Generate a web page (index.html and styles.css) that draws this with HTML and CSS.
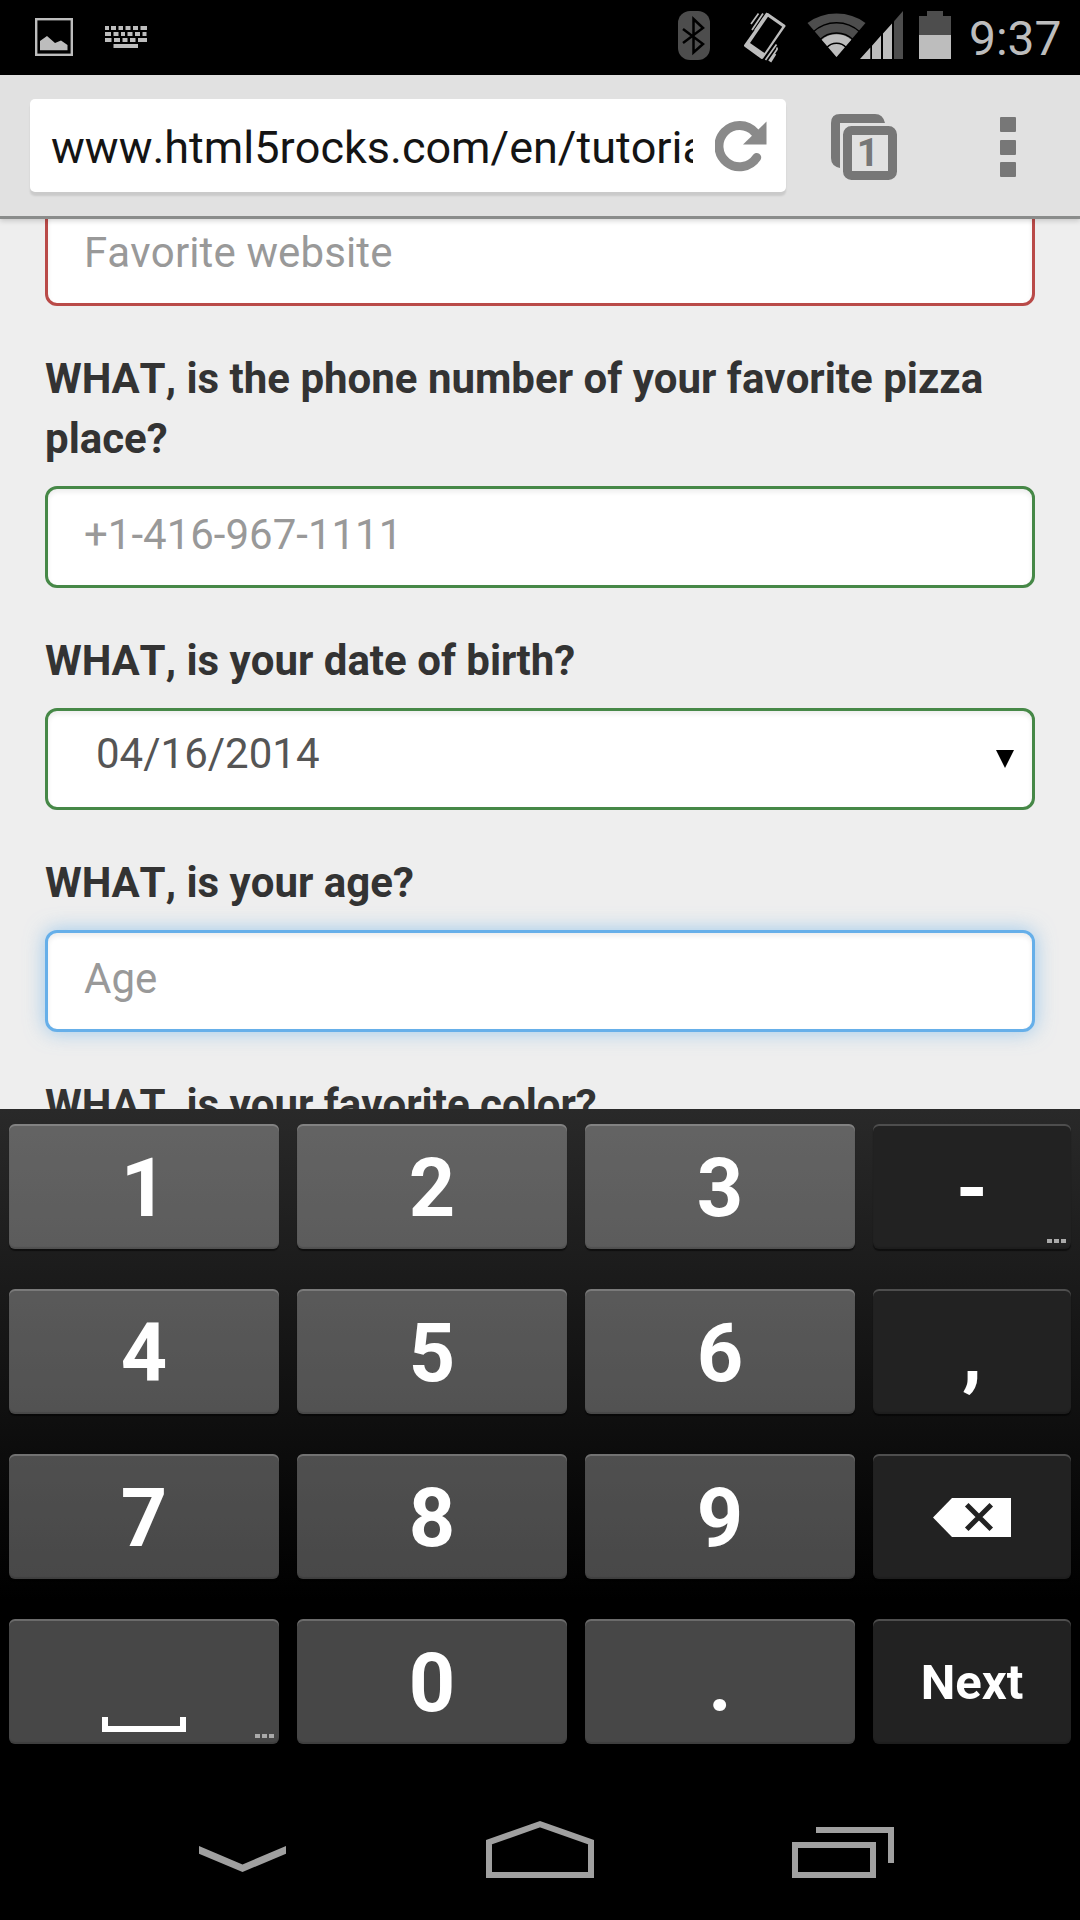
FILE: index.html
```html
<!DOCTYPE html>
<html lang="en">
<head>
<meta charset="utf-8">
<title>www.html5rocks.com</title>
<link rel="stylesheet" href="styles.css">
</head>
<body>
<div class="screen">
  <header class="status">
    <div class="status-left">
      <svg width="38" height="38" viewBox="0 0 38 38"><rect x="1.2" y="1.2" width="35.6" height="35.6" fill="none" stroke="#bdbdbd" stroke-width="2.4"/><path d="M5 32.3V23l7-5 8 7 6-2.500 6.500 4.500v5.300z" fill="#bdbdbd"/></svg>
      <svg width="42" height="22" viewBox="0 0 42 22" fill="none" stroke="#bdbdbd" stroke-width="4"><path d="M0 2h4m2 0h5m2.500 0h4.500m2.500 0h5m2.500 0h5m2.500 0h6.500M0 8h6m2.500 0h5m2.500 0h4m2.500 0h5m2.500 0h5m2.500 0h4M0 14h6.500m2.500 0h6m2.500 0h5m2.500 0h5.500m2.500 0h9M8.500 20h24.500"/></svg>
    </div>
    <div class="status-right">
      <svg class="bt" width="32" height="49" viewBox="0 0 32 49"><rect width="32" height="49" rx="12" fill="#4d4d4d"/><path d="M5 18l20 15-9.500 8.500V8L25 17 5 32" fill="none" stroke="#000" stroke-width="2.500"/></svg>
      <svg class="vib" width="42" height="51" viewBox="0 0 42 51"><path d="M23.500 2.500L40 14 18 45.500 1.500 33.500z" fill="#bdbdbd" stroke="#bdbdbd" stroke-width="3" stroke-linejoin="round"/><path d="M24 4.800L38.200 14.800 20.500 41 6 31z"/><path d="M14.500 1.500L7 12M19 1.500L8 18M23 1L11 18.500M32.500 32.500L21.500 48M33 35.500v2L25 49M31.500 42l-5 8" fill="none" stroke="#bdbdbd" stroke-width="1.700"/></svg>
      <svg class="wifi" width="59" height="45" viewBox="0 0 59 45"><path d="M29.500 44L.5 10Q13 .5 29.500 .5T58.500 10z" fill="#4d4d4d"/><path d="M29.500 44L14.700 26.700a22.800 22.800 0 0 1 29.600 0z" fill="#bdbdbd"/><g fill="none" stroke="#000" stroke-width="1.500"><path d="M6 19a34.300 34.300 0 0 1 47 0M12.500 27a24 24 0 0 1 34 0M19.500 35a13 13 0 0 1 20 0"/></g></svg>
      <svg class="signal" width="43" height="48" viewBox="0 0 43 48"><path d="M0 48L10.300 36.500V48zM12 48V34.700L21 24.600V48zM23 48V22.400L32 12.400V48z" fill="#bdbdbd"/><path d="M34 48V10.200L43 0v48z" fill="#4d4d4d"/></svg>
      <svg class="batt" width="32" height="48" viewBox="0 0 32 48"><path d="M0 24V5h8V0h16v5h8v19z" fill="#4d4d4d"/><path d="M0 24h32v24H0z" fill="#bdbdbd"/></svg>
      <span class="clock">9:37</span>
    </div>
  </header>

  <nav class="toolbar">
    <div class="omnibox">
      <span class="url">www.html5rocks.com/en/tutorials</span>
      <svg class="reload" width="52" height="52" viewBox="0 0 52 52"><path d="M41.700 36.500A20.600 20.600 0 1 1 40 11.500" fill="none" stroke="#8a8a8a" stroke-width="9" stroke-linecap="round"/><path d="M51.500 .5v23H28z" fill="#8a8a8a"/></svg>
    </div>
    <svg class="tabs" width="66" height="66" viewBox="0 0 66 66"><path d="M9 54q-9-2-9-10V9q0-9 9-9h35q8 0 10 9H9z" fill="#777"/><rect x="10" y="10" width="56" height="56" rx="8" fill="#e1e1e1"/><rect x="16.500" y="16.500" width="45" height="45" rx="4" fill="none" stroke="#777" stroke-width="9"/><text x="37" y="52" text-anchor="middle" class="tab-count">1</text></svg>
    <div class="menu"><i></i><i></i><i></i></div>
  </nav>

  <main class="page">
    <div class="field invalid first"><span class="ph site">Favorite website</span></div>
    <label class="question">WHAT, is the phone number of your favorite pizza place?</label>
    <div class="field valid"><span class="ph">+1-416-967-1111</span></div>
    <label class="question">WHAT, is your date of birth?</label>
    <div class="field valid date"><span class="value">04/16/2014</span><svg width="18" height="18" viewBox="0 0 18 18"><path d="M0 0h18L9 18z"/></svg></div>
    <label class="question">WHAT, is your age?</label>
    <div class="field focus"><span class="ph">Age</span></div>
    <label class="question">WHAT, is your favorite color?</label>
  </main>

  <section class="keyboard">
    <div class="key">1</div><div class="key">2</div><div class="key">3</div><div class="key side">-<span class="more"><i></i><i></i><i></i></span></div>
    <div class="key">4</div><div class="key">5</div><div class="key">6</div><div class="key side">,</div>
    <div class="key">7</div><div class="key">8</div><div class="key">9</div>
    <div class="key side icon"><svg width="78" height="39" viewBox="0 0 78 39"><path d="M0 19.500L19 0h59v39H19z" fill="#fff"/><path d="M35.500 8.500l21 21M56.500 8.500l-21 21" stroke="#222" stroke-width="5" stroke-linecap="square"/></svg></div>
    <div class="key space"><span class="bar"></span><span class="more"><i></i><i></i><i></i></span></div><div class="key">0</div><div class="key">.</div><div class="key side next">Next</div>
  </section>

  <footer class="navbar">
    <svg class="hide" width="87" height="26" viewBox="0 0 87 26"><path d="M0 0l43.500 18.500L87 0v7.800L43.500 26 0 7.800z" fill="#a0a0a0"/></svg>
    <svg class="home" width="108" height="57" viewBox="0 0 108 57"><path d="M3 54V21.200L54 3.200l51 18V54z" fill="none" stroke="#a0a0a0" stroke-width="6"/></svg>
    <svg class="recent" width="102" height="51" viewBox="0 0 102 51"><path d="M3 18h78v30H3zM24 3h75v33" fill="none" stroke="#a0a0a0" stroke-width="6"/></svg>
  </footer>
</div>
</body>
</html>
```
FILE: styles.css
```css
* { box-sizing: border-box; }
body { margin: 0; background: #000; font-family: Roboto, sans-serif; font-kerning: none; }
svg { display: block; flex: none; }
.screen { width: 1080px; height: 1920px; overflow: hidden; display: flex; flex-direction: column; }

.status { height: 75px; flex: none; display: flex; justify-content: space-between; padding: 0 19px 0 35px; }
.status-left { display: flex; gap: 32px; padding-top: 18px; }
.status-left svg + svg { margin-top: 8px; }
.status-right { display: flex; padding-top: 11px; }
.vib { margin: 1px 0 0 34px; }
.wifi { margin: 2px 0 0 21px; }
.signal { margin: 0 0 0 -6px; }
.batt { margin-left: 16px; }
.clock { width: 92px; flex: none; margin-left: 18px; font-size: 48px; line-height: 56px; color: #bdbdbd; white-space: nowrap; }

.toolbar { height: 144px; flex: none; display: flex; align-items: flex-start; padding: 24px 64px 0 30px; background: #e1e1e1; border-bottom: 3px solid #8a8c8b; box-shadow: 0 2px 5px rgba(0,0,0,.16); position: relative; z-index: 1; }
.omnibox { width: 756px; height: 93px; display: flex; background: #fff; border-radius: 5px; box-shadow: 0 4px 2px rgba(0,0,0,.1); padding: 22px 0 0 21px; }
.url { width: 642px; height: 60px; overflow: hidden; white-space: nowrap; font-size: 45px; line-height: 53px; color: #141414; }
.reload { margin-left: 22px; }
.tabs { margin: 15px 0 0 45px; }
.tab-count { font-size: 39px; font-weight: 700; fill: #777; }
.menu { display: flex; flex-direction: column; gap: 7.500px; margin: 18px 0 0 103px; }
.menu i { width: 16px; height: 15px; border-radius: 1px; background: #777; }

.page { height: 890px; flex: none; overflow: hidden; background: #eee; padding: 0 45px; display: flex; flex-direction: column; }
.field { height: 102px; flex: none; border: 3px solid; border-radius: 12px; background: #fff; padding: 0 36px; box-shadow: inset 0 3px 5px rgba(0,0,0,.075); font-size: 42px; line-height: 92px; white-space: nowrap; }
.first { margin-top: -15px; }
.invalid { border-color: #b94a48; }
.valid { border-color: #468847; }
.focus { border-color: #66afe9; box-shadow: inset 0 3px 5px rgba(0,0,0,.075), 0 0 20px rgba(102,175,233,.6); }
.ph { color: #999; }
.site { letter-spacing: .13px; }
.date { display: flex; justify-content: space-between; color: #555; padding: 0 18px 0 48px; line-height: 86px; }
.date svg { fill: #000; margin-top: 39px; }
.question { display: block; flex: none; margin: 43px 0 17px; font-size: 42px; line-height: 60px; font-weight: 700; color: #333; }

.keyboard { height: 667px; flex: none; display: grid; grid-template-columns: 270px 270px 270px 198px; grid-auto-rows: 125px; gap: 40px 18px; padding: 15px 9px 0; background: linear-gradient(#292929, #000 491px); }
.key { position: relative; border-radius: 6px; background: rgba(255,255,255,.28); box-shadow: inset 0 2px 0 rgba(255,255,255,.2), inset 0 -2px 1px rgba(0,0,0,.12), 0 2px 1px rgba(0,0,0,.5); color: #fff; font-size: 81px; font-weight: 700; line-height: 130px; text-align: center; }
.side { background: #222; }
.icon { display: flex; align-items: flex-start; padding: 44px 0 0 60px; }
.next { font-size: 49px; line-height: 128px; }
.space { display: flex; justify-content: center; align-items: flex-end; padding-bottom: 12px; }
.bar { width: 84px; height: 15px; border: 6px solid #fff; border-top: 0; }
.more { position: absolute; right: 5px; bottom: 6px; display: flex; gap: 2px; }
.more i { width: 5px; height: 4px; background: #aaa; }

.navbar { height: 144px; flex: none; display: flex; align-items: flex-start; background: #000; padding-left: 199px; }
.hide { margin-top: 70px; }
.home { margin: 45px 0 0 200px; }
.recent { margin: 51px 0 0 198px; }
```
